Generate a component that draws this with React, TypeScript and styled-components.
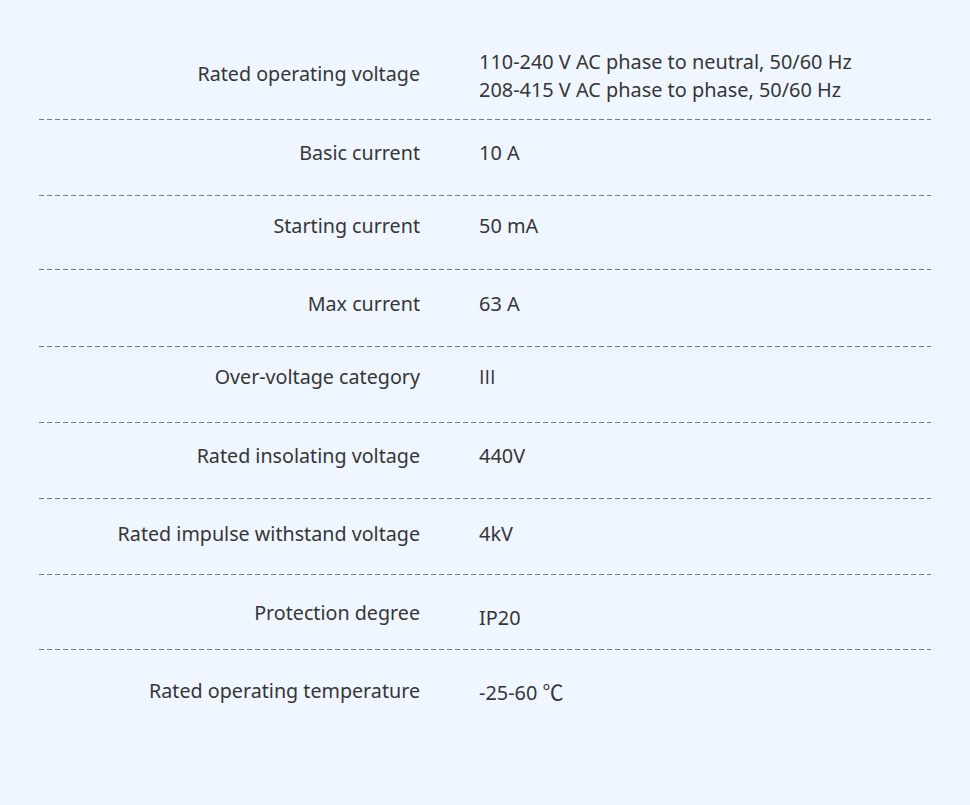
import styled, { createGlobalStyle } from "styled-components";

const GlobalStyle = createGlobalStyle`
  html, body {
    margin: 0;
    padding: 0;
    background: #eff6ff;
  }
  body {
    font-family: "Noto Sans", "Open Sans", sans-serif;
    color: #363636;
  }
`;

const Page = styled.div`
  width: 970px;
  height: 805px;
  background: #eff6ff;
  display: flex;
  justify-content: center;
`;

const SpecTable = styled.div`
  width: 892px;
  display: flex;
  flex-direction: column;
`;

// dashed rule drawn as a repeating gradient so dash length matches (5px on, 3px off)
const Row = styled.div<{ $top: number; $height: number; $last?: boolean }>`
  display: grid;
  grid-template-columns: 381px 1fr;
  column-gap: 59px;
  align-items: start;
  box-sizing: border-box;
  height: ${(p) => p.$height}px;
  padding-top: ${(p) => p.$top}px;
  background-image: ${(p) =>
    p.$last ? "none" : "linear-gradient(to right, #76797e 5px, transparent 5px)"};
  background-size: 8px 1px;
  background-repeat: repeat-x;
  background-position: left bottom;
`;

const Label = styled.div<{ $shift?: number }>`
  text-align: right;
  font-size: 19.7px;
  line-height: 28px;
  margin-top: ${(p) => p.$shift || 0}px;
`;

const Value = styled.div<{ $shift?: number }>`
  font-size: 19.9px;
  line-height: 28px;
  margin-top: ${(p) => p.$shift || 0}px;
`;

const Numeral = styled.span`
  font-family: "Open Sans", sans-serif;
`;

const Unit = styled.span`
  font-family: "Noto Sans CJK SC", sans-serif;
  font-size: 21px;
`;

type Spec = {
  label: string;
  value: React.ReactNode[];
  top: number;
  height: number;
  labelShift?: number;
  valueShift?: number;
};

const specs: Spec[] = [
  {
    label: "Rated operating voltage",
    value: [
      "110-240 V AC phase to neutral, 50/60 Hz",
      "208-415 V AC phase to phase, 50/60 Hz",
    ],
    top: 48,
    height: 120,
    labelShift: 12,
  },
  { label: "Basic current", value: ["10 A"], top: 19, height: 76 },
  { label: "Starting current", value: ["50 mA"], top: 16, height: 74 },
  { label: "Max current", value: ["63 A"], top: 20, height: 77 },
  { label: "Over-voltage category", value: [<Numeral>III</Numeral>], top: 16, height: 76 },
  { label: "Rated insolating voltage", value: ["440V"], top: 19, height: 76 },
  { label: "Rated impulse withstand voltage", value: ["4kV"], top: 21, height: 76 },
  { label: "Protection degree", value: ["IP20"], top: 24, height: 75, valueShift: 5 },
  {
    label: "Rated operating temperature",
    value: [
      <>
        -25-60 <Unit>℃</Unit>
      </>,
    ],
    top: 27,
    height: 100,
  },
];

export default function App() {
  return (
    <>
      <GlobalStyle />
      <Page>
        <SpecTable>
          {specs.map((s, i) => (
            <Row
              key={s.label}
              $top={s.top}
              $height={s.height}
              $last={i === specs.length - 1}
            >
              <Label $shift={s.labelShift}>{s.label}</Label>
              <Value $shift={s.valueShift}>
                {s.value.map((v, j) => (
                  <div key={j}>{v}</div>
                ))}
              </Value>
            </Row>
          ))}
        </SpecTable>
      </Page>
    </>
  );
}
